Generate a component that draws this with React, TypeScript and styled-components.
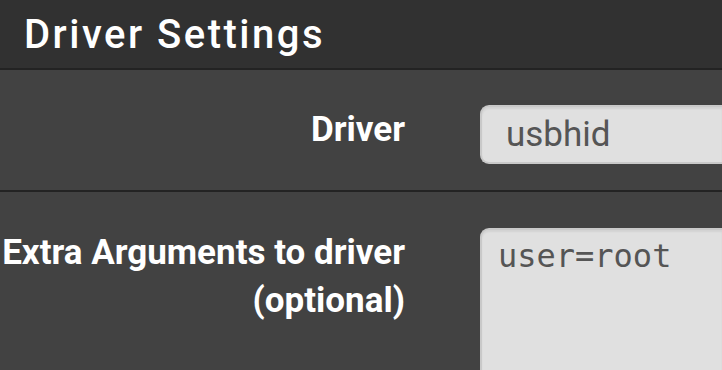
import * as React from "react";
import styled, { createGlobalStyle } from "styled-components";

const GlobalStyle = createGlobalStyle`
  html, body {
    margin: 0;
    padding: 0;
    background: #424242;
    overflow: hidden;
  }
  body {
    font-family: Roboto, "Liberation Sans", sans-serif;
  }
`;

const Panel = styled.section`
  width: 722px;
  height: 370px;
  background: #424242;
  overflow: hidden;
`;

const Heading = styled.h2`
  margin: 0;
  height: 68px;
  padding: 0 0 0 24px;
  display: flex;
  align-items: center;
  background: #313131;
  border-bottom: 2px solid #232323;
  color: #ffffff;
  font-size: 40px;
  font-weight: 500;
  letter-spacing: 2.5px;
  box-sizing: content-box;
`;

const Row = styled.div<{ $top: number; $bottom: number }>`
  display: grid;
  grid-template-columns: 405px 1fr;
  column-gap: 75px;
  align-items: start;
  padding: ${(p) => p.$top}px 0 ${(p) => p.$bottom}px 0;
  border-bottom: 2px solid #232323;

  &:last-child {
    border-bottom: none;
  }
`;

const Label = styled.label`
  text-align: right;
  color: #ffffff;
  font-size: 35px;
  font-weight: 700;
  line-height: 48px;
  margin-top: 1px;
`;

const Input = styled.input`
  box-sizing: border-box;
  width: 100%;
  height: 59px;
  margin: 0;
  padding: 0 24px;
  border: 2px solid #c9c9c9;
  border-right: none;
  border-radius: 9px 0 0 9px;
  background: #e0e0e0;
  box-shadow: inset 0 2px 2px rgba(0, 0, 0, 0.06);
  color: #555555;
  font-family: Roboto, "Liberation Sans", sans-serif;
  font-size: 35px;
  outline: none;
`;

const TextArea = styled.textarea`
  box-sizing: border-box;
  display: block;
  width: 100%;
  height: 190px;
  margin: 0;
  padding: 3px 16px;
  border: 2px solid #c9c9c9;
  border-right: none;
  border-radius: 9px 0 0 0;
  background: #e0e0e0;
  box-shadow: inset 0 2px 2px rgba(0, 0, 0, 0.06);
  color: #555555;
  font-family: "DejaVu Sans Mono", "Liberation Mono", monospace;
  font-size: 32px;
  line-height: 46px;
  resize: none;
  outline: none;
`;

export default function App() {
  return (
    <>
      <GlobalStyle />
      <Panel>
        <Heading>Driver Settings</Heading>
        <Row $top={35} $bottom={26}>
          <Label>Driver</Label>
          <Input defaultValue="usbhid" readOnly />
        </Row>
        <Row $top={36} $bottom={0}>
          <Label>
            Extra Arguments to driver
            <br />
            (optional)
          </Label>
          <TextArea defaultValue="user=root" readOnly />
        </Row>
      </Panel>
    </>
  );
}
